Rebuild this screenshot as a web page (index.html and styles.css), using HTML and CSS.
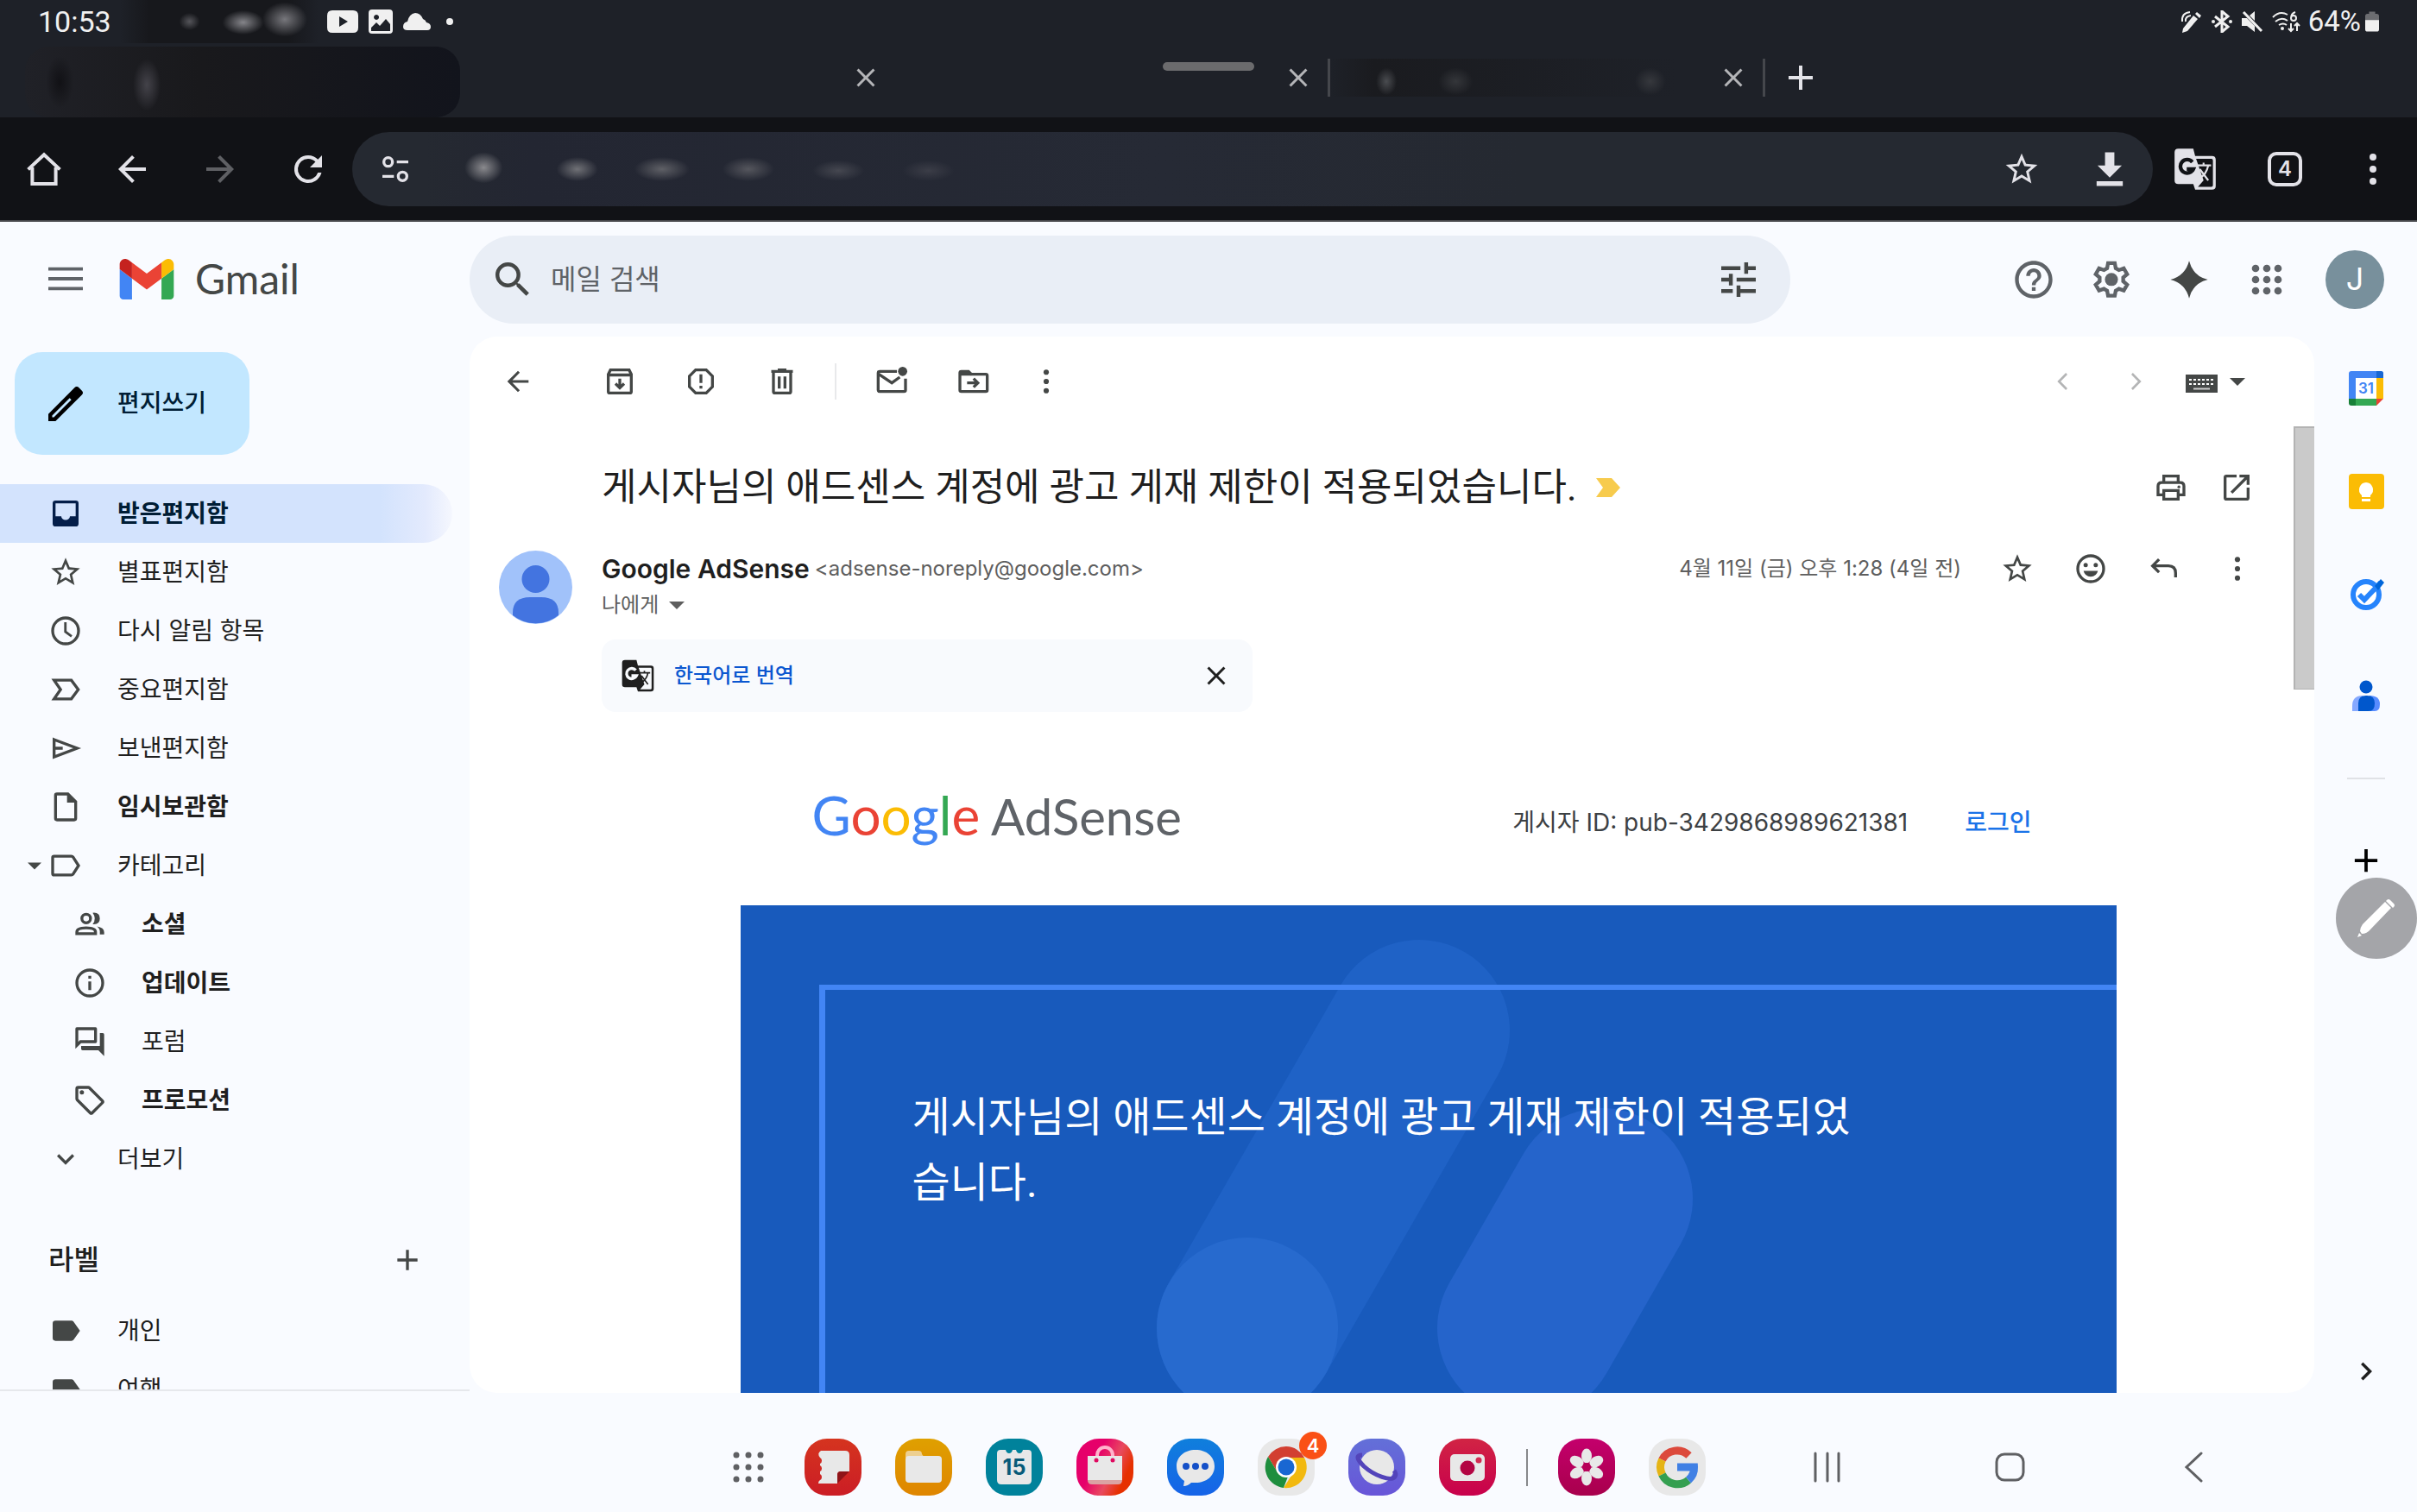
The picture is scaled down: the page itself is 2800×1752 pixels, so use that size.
FILE: index.html
```html
<!DOCTYPE html>
<html lang="ko">
<head>
    <meta charset="UTF-8">
    <meta name="viewport" content="width=device-width, initial-scale=1.0">
    <title>Gmail</title>
    <link rel="stylesheet" href="styles.css">
</head>
<body>
    <!-- Shared icons -->
    <svg class="defs" aria-hidden="true">
        <symbol id="i-star" viewBox="0 0 24 24"><path d="M22 9.24l-7.19-.62L12 2 9.19 8.63 2 9.24l5.46 4.73L5.82 21 12 17.27 18.18 21l-1.63-7.03L22 9.24zM12 15.4l-3.76 2.27 1-4.28-3.32-2.88 4.38-.38L12 6.1l1.71 4.04 4.38.38-3.32 2.88 1 4.28L12 15.4z"/></symbol>
        <symbol id="i-more" viewBox="0 0 24 24"><circle cx="12" cy="5" r="2"/><circle cx="12" cy="12" r="2"/><circle cx="12" cy="19" r="2"/></symbol>
        <symbol id="i-close" viewBox="0 0 24 24"><path d="M19 6.41L17.59 5 12 10.59 6.41 5 5 6.41 10.59 12 5 17.59 6.41 19 12 13.41 17.59 19 19 17.59 13.41 12z"/></symbol>
        <symbol id="i-plus" viewBox="0 0 24 24"><path d="M19 13h-6v6h-2v-6H5v-2h6V5h2v6h6v2z"/></symbol>
        <symbol id="i-back" viewBox="0 0 24 24"><path d="M20 11H7.83l5.59-5.59L12 4l-8 8 8 8 1.41-1.41L7.83 13H20v-2z"/></symbol>
        <symbol id="i-right" viewBox="0 0 24 24"><path d="M10 6L8.59 7.41 13.17 12l-4.58 4.59L10 18l6-6z"/></symbol>
        <symbol id="i-label" viewBox="0 0 24 24"><path d="M3 7a2 2 0 0 1 2-2h11c.67 0 1.27.33 1.63.84L22 12l-4.37 6.16c-.36.51-.96.84-1.63.84H5a2 2 0 0 1-2-2V7z"/></symbol>
    </svg>

    <!-- Status bar -->
    <div class="statusbar">
        <div class="status-left">
            <span class="clock">10:53</span>
            <span class="smudge"></span>
            <svg viewBox="0 0 36 26"><path fill-rule="evenodd" d="M6 0h24q6 0 6 6v14q0 6-6 6H6q-6 0-6-6V6q0-6 6-6zM14 7v12l10-6z"/></svg>
            <svg viewBox="0 0 28 28"><path fill-rule="evenodd" d="M4 0h20q4 0 4 4v20q0 4-4 4H4q-4 0-4-4V4q0-4 4-4zM3 25h22v-8l-5-6-7 8-4-4-6 6zM9 6a3 3 0 1 0 .1 0z"/></svg>
            <svg viewBox="0 0 32 20"><path d="M5 20q-5 0-5-4 0-5 5-6Q7 1 14 0q6 0 9 7 3 1 4 4 5 1 5 5 0 4-4 4z"/></svg>
            <span class="dot"></span>
        </div>
        <div class="status-right">
            <svg viewBox="0 0 26 26"><path d="M3 21L15 6l5 4L8 24l-6 2zM17 4l2-2 5 4-2 3z"/><path class="line" d="M2 13Q1 3 11 2M6 13Q5 7 12 6"/></svg>
            <svg viewBox="0 0 26 26"><path class="line thick" d="M5 7l15 12-7 6V1l7 6L5 19"/><circle cx="3" cy="13" r="2"/><circle cx="23" cy="13" r="2"/></svg>
            <svg viewBox="0 0 26 26"><path d="M1 9h6l9 9v7l-9-7H1zM10 6l6-5v11z"/><path class="line thick" d="M3 2l21 22"/></svg>
            <svg class="wifi" viewBox="0 0 34 26"><path class="line" d="M2 8Q10 0 19 5M5 13q7-6 14-1M9 17q5-3 9 0M28 2q-5 2-5 7a3 3 0 1 0 3-3q-3 0-3 3M23 15v9m-3-3l3 3 3-3M30 24v-9m-3 3l3-3 3 3"/><circle cx="13" cy="21" r="2"/></svg>
            <span class="percent">64%</span>
            <svg class="battery" viewBox="0 0 18 26"><path class="dim" d="M5 0h8v3h2q3 0 3 3v6H0V6q0-3 3-3h2z"/><path d="M0 11h18v12q0 3-3 3H3q-3 0-3-3z"/></svg>
        </div>
    </div>

    <!-- Browser tabs -->
    <div class="tabs">
        <div class="tab active"></div>
        <div class="tab"><button aria-label="탭 닫기"><svg><use href="#i-close"/></svg></button></div>
        <div class="tab ruled"><button aria-label="탭 닫기"><svg><use href="#i-close"/></svg></button></div>
        <div class="tab ruled blurred"><button aria-label="탭 닫기"><svg><use href="#i-close"/></svg></button></div>
        <button class="new-tab" aria-label="새 탭"><svg><use href="#i-plus"/></svg></button>
        <span class="handle"></span>
    </div>

    <!-- Browser toolbar -->
    <div class="browser-bar">
        <button aria-label="홈"><svg viewBox="0 0 24 24"><path class="stroke" d="M2.8 12.2L12 3.6l9.200 8.600M5.200 11v9.500h13.600V11"/></svg></button>
        <button aria-label="뒤로"><svg><use href="#i-back"/></svg></button>
        <button class="off" aria-label="앞으로" disabled><svg viewBox="0 0 24 24"><path d="M4 11h12.170l-5.590-5.590L12 4l8 8-8 8-1.410-1.410L16.170 13H4v-2z"/></svg></button>
        <button aria-label="새로고침"><svg viewBox="0 0 24 24"><path d="M17.65 6.350A7.960 7.960 0 0 0 12 4a8 8 0 1 0 7.730 10h-2.080A6 6 0 1 1 12 6c1.660 0 3.140.69 4.220 1.780L13 11h7V4l-2.350 2.350z"/></svg></button>
        <div class="omnibox">
            <svg viewBox="0 0 24 24"><path class="stroke" d="M13 7h8M3 17h8"/><circle class="stroke" cx="7" cy="7" r="3"/><circle class="stroke" cx="17" cy="17" r="3"/></svg>
            <input type="text" aria-label="주소">
            <button aria-label="북마크"><svg><use href="#i-star"/></svg></button>
            <button aria-label="다운로드"><svg class="wide" viewBox="0 0 24 24"><path d="M9.500 3h5v7h4L12 16.500 5.500 10h4zM5 18.500h14V21H5z"/></svg></button>
        </div>
        <button aria-label="번역"><svg class="wide" viewBox="0 0 24 24"><path d="M3 1h8l1 4h9q2 0 2 2v14q0 2-2 2h-9l-1-3H3q-2 0-2-2V3q0-2 2-2z"/><path class="hole" d="M12.500 6.500h8.200q.8 0 .8.8v13.400q0 .8-.8.8h-7.200l3-3.500z"/><path class="hole-line" d="M10.500 8.200A3.600 3.600 0 1 0 11 12H7.500"/><path class="ink-line" d="M13 10h7.500M16.500 8.500V10M19 10q-1 5-5 7M14.500 12l4.500 6"/></svg></button>
        <button class="tab-count" aria-label="열린 탭">4</button>
        <button aria-label="메뉴"><svg><use href="#i-more"/></svg></button>
    </div>

    <div class="gmail">
        <header class="header">
            <div class="brand">
                <button aria-label="기본 메뉴"><svg class="menu-icon" viewBox="3 3 18 18"><path d="M3 18h18v-1.700H3V18zm0-5.150h18v-1.700H3v1.700zM3 6v1.700h18V6H3z"/></svg></button>
                <svg class="gmail-logo" viewBox="0 0 88 66"><path fill="#4285f4" d="M6 66h14V32L0 17v43c0 3.300 2.700 6 6 6"/><path fill="#34a853" d="M68 66h14c3.300 0 6-2.700 6-6V17L68 32"/><path fill="#fbbc04" d="M68 6v26l20-15V9c0-7.400-8.500-11.700-14.400-7.200"/><path fill="#ea4335" d="M20 32V6l24 18L68 6v26L44 50"/><path fill="#c5221f" d="M0 9v8l20 15V6l-5.600-4.200C8.500-2.700 0 1.600 0 9"/></svg>
                <span class="brand-name">Gmail</span>
            </div>
            <form class="search">
                <button type="button" aria-label="검색"><svg viewBox="3 3 18 18"><path d="M15.500 14h-.79l-.28-.27A6.470 6.470 0 0 0 16 9.500 6.500 6.500 0 1 0 9.500 16c1.610 0 3.090-.59 4.230-1.570l.27.28v.79l5 4.990L20.490 19l-4.990-5zm-6 0C7.010 14 5 11.990 5 9.500S7.010 5 9.500 5 14 7.010 14 9.500 11.990 14 9.500 14z"/></svg></button>
                <input type="text" placeholder="메일 검색" aria-label="메일 검색">
                <button type="button" aria-label="검색 옵션"><svg viewBox="3 3 18 18"><path d="M3 17v2h6v-2H3zM3 5v2h10V5H3zm10 16v-2h8v-2h-8v-2h-2v6h2zM7 9v2H3v2h4v2h2V9H7zm14 4v-2H11v2h10zm-6-4h2V7h4V5h-4V3h-2v6z"/></svg></button>
            </form>
            <div class="header-actions">
                <button aria-label="지원"><svg viewBox="0 0 24 24"><path d="M11 18h2v-2h-2v2zm1-16C6.480 2 2 6.480 2 12s4.480 10 10 10 10-4.480 10-10S17.520 2 12 2zm0 18c-4.410 0-8-3.590-8-8s3.590-8 8-8 8 3.590 8 8-3.590 8-8 8zm0-14c-2.210 0-4 1.790-4 4h2c0-1.100.9-2 2-2s2 .9 2 2c0 2-3 1.750-3 5h2c0-2.250 3-2.500 3-5 0-2.210-1.790-4-4-4z"/></svg></button>
                <button aria-label="설정"><svg viewBox="0 0 24 24"><path class="stroke" d="M10.200 3.200h3.600l.5 2.700 1.700 1 2.600-.9 1.800 3.100-2.100 1.800v2l2.100 1.800-1.800 3.100-2.600-.9-1.700 1-.5 2.700h-3.600l-.5-2.700-1.700-1-2.600.9-1.800-3.100 2.100-1.800v-2L3.600 9.100l1.800-3.100 2.600.9 1.700-1z"/><circle cx="12" cy="11.900" r="3.500"/></svg></button>
                <button class="dark" aria-label="Gemini"><svg viewBox="0 0 24 24"><path d="M12 2q2 8 10 10-8 2-10 10-2-8-10-10 8-2 10-10z"/></svg></button>
                <button aria-label="Google 앱"><svg viewBox="0 0 24 24"><path d="M6 8a2 2 0 1 0 0-4 2 2 0 0 0 0 4zm6 12a2 2 0 1 0 0-4 2 2 0 0 0 0 4zm-6 0a2 2 0 1 0 0-4 2 2 0 0 0 0 4zm0-6a2 2 0 1 0 0-4 2 2 0 0 0 0 4zm6 0a2 2 0 1 0 0-4 2 2 0 0 0 0 4zm4-8a2 2 0 1 0 4 0 2 2 0 0 0-4 0zm-4 2a2 2 0 1 0 0-4 2 2 0 0 0 0 4zm6 6a2 2 0 1 0 0-4 2 2 0 0 0 0 4zm0 6a2 2 0 1 0 0-4 2 2 0 0 0 0 4z"/></svg></button>
                <button class="account" aria-label="계정">J</button>
            </div>
        </header>

        <div class="body">
            <aside class="sidebar">
                <button class="compose"><svg viewBox="3 3 18 18"><path d="M3 17.250V21h3.750L20.500 7.250a1.500 1.500 0 0 0 0-2.100L18.850 3.500a1.500 1.500 0 0 0-2.100 0zM5.900 19H5v-.9L14.100 9l.9.9z" fill-rule="evenodd"/></svg>편지쓰기</button>
                <nav class="folders">
                    <a href="#" class="current"><svg viewBox="0 0 24 24"><path d="M19 3H5a2 2 0 0 0-2 2v14a2 2 0 0 0 2 2h14a2 2 0 0 0 2-2V5a2 2 0 0 0-2-2zm0 11h-4c0 1.600-1.350 2.500-3 2.500S9 15.600 9 14H5V5h14v9z"/></svg>받은편지함</a>
                    <a href="#"><svg><use href="#i-star"/></svg>별표편지함</a>
                    <a href="#"><svg viewBox="0 0 24 24"><path d="M12 2a10 10 0 1 0 0 20 10 10 0 0 0 0-20zm0 18a8 8 0 1 1 0-16 8 8 0 0 1 0 16zm.7-14H11v7l4.700 3.500 1-1.300-4-3z"/></svg>다시 알림 항목</a>
                    <a href="#"><svg viewBox="0 0 24 24"><path class="stroke" d="M4 5.500h12L20.800 12 16 18.500H4L8.500 12z"/></svg>중요편지함</a>
                    <a href="#"><svg viewBox="0 0 24 24"><path class="stroke" d="M4 6l16 6-16 6zM4 12h6"/></svg>보낸편지함</a>
                    <a href="#" class="unread"><svg viewBox="0 0 24 24"><path d="M14 2H6a2 2 0 0 0-2 2v16a2 2 0 0 0 2 2h12a2 2 0 0 0 2-2V8zM6 20V4h7v5h5v11z"/></svg>임시보관함</a>
                    <a href="#" class="category"><svg class="caret" viewBox="0 0 16 8"><path d="M0 0h16L8 8z"/></svg><svg viewBox="0 0 24 24"><path class="stroke" d="M3 6.500q0-1 1-1h12q.8 0 1.200.6L21 12l-3.800 5.900q-.4.6-1.200.6H4q-1 0-1-1z"/></svg>카테고리</a>
                    <a href="#" class="sub unread"><svg viewBox="0 0 24 24"><circle class="stroke" cx="9.500" cy="8" r="3"/><path class="stroke" d="M3 18.500v-1q0-3 6.500-3t6.500 3v1z"/><path d="M14 4q5-.5 5 4t-5 4q3-4 0-8zM17 13.500q5 .8 5 4V19h-3v-2q0-2-2-3.500z"/></svg>소셜</a>
                    <a href="#" class="sub unread"><svg viewBox="0 0 24 24"><path d="M11 7h2v2h-2zm0 4h2v6h-2zm1-9a10 10 0 1 0 0 20 10 10 0 0 0 0-20zm0 18a8 8 0 1 1 0-16 8 8 0 0 1 0 16z"/></svg>업데이트</a>
                    <a href="#" class="sub"><svg viewBox="0 0 24 24"><path d="M15 4v7H5.170L4 12.170V4h11m1-2H3a1 1 0 0 0-1 1v14l4-4h10a1 1 0 0 0 1-1V3a1 1 0 0 0-1-1zm5 4h-2v9H6v2a1 1 0 0 0 1 1h11l4 4V7a1 1 0 0 0-1-1z"/></svg>포럼</a>
                    <a href="#" class="sub unread"><svg viewBox="0 0 24 24"><path d="M21.410 11.580l-9-9A2 2 0 0 0 11 2H4a2 2 0 0 0-2 2v7c0 .55.22 1.050.59 1.420l9 9a2 2 0 0 0 2.820 0l7-7a2 2 0 0 0 0-2.840zM13 20.010L4 11V4h7v-.010l9 9-7 7.020z"/><circle cx="6.500" cy="6.500" r="1.500"/></svg>프로모션</a>
                    <a href="#"><svg viewBox="0 0 24 24"><path d="M16.590 8.590L12 13.170 7.410 8.590 6 10l6 6 6-6z"/></svg>더보기</a>
                </nav>
                <div class="labels-head">
                    <h2>라벨</h2>
                    <button aria-label="새 라벨"><svg><use href="#i-plus"/></svg></button>
                </div>
                <nav class="folders">
                    <a href="#"><svg><use href="#i-label"/></svg>개인</a>
                    <a href="#"><svg><use href="#i-label"/></svg>여행</a>
                </nav>
            </aside>

            <main class="card">
                <div class="mail-tools">
                    <button class="go-back" aria-label="뒤로"><svg viewBox="-1 -1 26 26"><use href="#i-back" width="24" height="24"/></svg></button>
                    <div class="tool-group">
                        <button aria-label="보관처리"><svg viewBox="0 0 24 24"><path class="stroke" d="M4 7l1.500-3h13L20 7v12q0 1-1 1H5q-1 0-1-1zM4 7.500h16M12 10v6M9 13.500l3 3 3-3"/></svg></button>
                        <button aria-label="스팸신고"><svg viewBox="0 0 24 24"><path class="stroke" d="M8.300 4h7.400L20 8.300v7.400L15.700 20H8.300L4 15.700V8.300z"/><path d="M11 7h2v6h-2zm0 8h2v2h-2z"/></svg></button>
                        <button aria-label="삭제"><svg viewBox="0 0 24 24"><path class="stroke" d="M6 6v13q0 1 1 1h10q1 0 1-1V6M4.500 5h15M9 4h6M10 8.500v8.500M14 8.500v8.500"/></svg></button>
                    </div>
                    <div class="tool-group last">
                        <button aria-label="읽지 않음으로 표시"><svg viewBox="0 0 24 24"><path class="stroke" d="M15 5H3q-1 0-1 1v12q0 1 1 1h17q1 0 1-1v-8M2.500 7L11.500 13 17 9"/><circle cx="19" cy="5" r="3.200"/></svg></button>
                        <button aria-label="이동"><svg viewBox="0 0 24 24"><path class="stroke" d="M3 6q0-1 1-1h5l2 2h10q1 0 1 1v10q0 1-1 1H4q-1 0-1-1zM8 13h7M12.500 10l3 3-3 3"/><path d="M3 5h6l2 3H3z"/></svg></button>
                        <button class="slim" aria-label="더보기"><svg viewBox="-1 -1 26 26"><use href="#i-more" width="24" height="24"/></svg></button>
                    </div>
                    <div class="pager">
                        <button class="faint" aria-label="이전"><svg viewBox="0 0 24 24"><path d="M15 7.200L13.900 6 8 12l5.900 6 1.100-1.200L10.300 12z"/></svg></button>
                        <button class="faint" aria-label="다음"><svg viewBox="0 0 24 24"><path d="M9 7.200L10.100 6 16 12l-5.900 6L9 16.800l4.700-4.800z"/></svg></button>
                        <button class="keyboard" aria-label="입력 도구"><svg viewBox="0 0 40 40"><path d="M2 12h37v21H2z"/><path class="keys" d="M6 18h29M6 23h29"/><path class="bar" d="M11 28.500h19"/></svg><svg class="caret" viewBox="0 0 16 8"><path d="M0 0h16L8 8z"/></svg></button>
                    </div>
                </div>

                <div class="thread">
                    <div class="thread-content">
                        <div class="subject">
                            <h1>게시자님의 애드센스 계정에 광고 게재 제한이 적용되었습니다.</h1>
                            <svg class="marker" viewBox="0 0 28 22"><path d="M0 0h18l10 11-10 11H0l8-11z"/></svg>
                            <div class="subject-actions">
                                <button aria-label="인쇄"><svg viewBox="0 0 24 24"><path class="stroke" d="M7 8V4h10v4M7 17H3v-6q0-2.500 2.500-2.500h13Q21 8.500 21 11v6h-4M7 14h10v6H7z"/><circle cx="17.500" cy="11.500" r="1"/></svg></button>
                                <button aria-label="새 창에서 열기"><svg viewBox="0 0 24 24"><path d="M19 19H5V5h7V3H5a2 2 0 0 0-2 2v14a2 2 0 0 0 2 2h14a2 2 0 0 0 2-2v-7h-2v7zM14 3v2h3.590l-9.830 9.830 1.410 1.410L19 6.410V10h2V3h-7z"/></svg></button>
                            </div>
                        </div>

                        <div class="message">
                            <svg class="avatar" viewBox="0 0 85 85"><circle cx="42.500" cy="42.500" r="42.500" fill="#a1c2fa"/><circle cx="42.500" cy="33" r="16" fill="#4374e0"/><path d="M16 75v-3q0-18 20-18h13q20 0 20 18v3a42.500 42.500 0 0 1-53 0z" fill="#4374e0"/></svg>
                            <div class="message-main">
                                <div class="message-head">
                                    <div>
                                        <p class="from"><strong>Google AdSense</strong><span>&lt;adsense-noreply@google.com&gt;</span></p>
                                        <p class="to">나에게 <svg class="caret" viewBox="0 0 16 8"><path d="M0 0h16L8 8z"/></svg></p>
                                    </div>
                                    <div class="message-actions">
                                        <time>4월 11일 (금) 오후 1:28 (4일 전)</time>
                                        <button aria-label="별표"><svg viewBox="0 0 24 24"><use href="#i-star" width="24" height="24"/></svg></button>
                                        <button aria-label="이모티콘"><svg viewBox="0 0 24 24"><circle class="stroke" cx="12" cy="12" r="9"/><circle cx="8.500" cy="9.500" r="1.500"/><circle cx="15.500" cy="9.500" r="1.500"/><path d="M7 13.500h10q-1 4-5 4t-5-4z"/></svg></button>
                                        <button aria-label="답장"><svg viewBox="0 0 24 24"><path class="stroke" d="M8.500 5.500L4 10l4.500 4.500M4 10h11q5 0 5 5v3"/></svg></button>
                                        <button aria-label="더보기"><svg viewBox="-1 -1 26 26"><use href="#i-more" width="24" height="24"/></svg></button>
                                    </div>
                                </div>

                                <div class="translate">
                                    <svg viewBox="0 0 24 24"><path d="M3 1h8l1 4h9q2 0 2 2v14q0 2-2 2h-9l-1-3H3q-2 0-2-2V3q0-2 2-2z"/><path class="hole" d="M12.500 6.500h8.200q.8 0 .8.8v13.400q0 .8-.8.8h-7.200l3-3.500z"/><path class="hole-line" d="M10.500 8.200A3.600 3.600 0 1 0 11 12H7.500"/><path class="ink-line" d="M13 10h7.500M16.500 8.500V10M19 10q-1 5-5 7M14.500 12l4.500 6"/></svg>
                                    <a href="#">한국어로 번역</a>
                                    <button aria-label="닫기"><svg><use href="#i-close"/></svg></button>
                                </div>

                                <div class="email">
                                    <div class="email-head">
                                        <div class="adsense-logo"><span class="google"><span class="b">G</span><span class="r">o</span><span class="y">o</span><span class="b">g</span><span class="g">l</span><span class="r">e</span></span> AdSense</div>
                                        <div class="publisher"><span>게시자 ID: pub-3429868989621381</span><a href="#">로그인</a></div>
                                    </div>
                                    <div class="hero">
                                        <svg class="hero-art" viewBox="0 0 1594 720"><g stroke-width="210" stroke-linecap="round"><path stroke="#1f62c6" d="M786 145L587 490"/><path stroke="#276ace" d="M587 490h.1"/><path stroke="#2564cb" d="M998 340l-86 150"/></g></svg>
                                        <div class="hero-frame">
                                            <h2>게시자님의 애드센스 계정에 광고 게재 제한이 적용되었습니다.</h2>
                                        </div>
                                    </div>
                                </div>
                            </div>
                        </div>
                    </div>
                    <div class="scrollbar"><span></span></div>
                </div>
            </main>

            <aside class="rail">
                <button aria-label="캘린더"><svg viewBox="0 0 42 42"><path fill="#4285f4" d="M4 1h34q3 0 3 3v6H10v23H1V4q0-3 3-3z"/><path fill="#1967d2" d="M33 1h5q3 0 3 3v6h-8z"/><path fill="#fbbc04" d="M33 9h8v24h-8z"/><path fill="#34a853" d="M9 33h24v8H9z"/><path fill="#188038" d="M1 33h8v8H4q-3 0-3-3z"/><path fill="#ea4335" d="M33 33h8l-8 8z"/><path fill="#fff" d="M9 9h24v24H9z"/><text x="21" y="27" text-anchor="middle">31</text></svg></button>
                <button aria-label="Keep"><svg viewBox="0 0 42 42"><rect x="1" y="1" width="41" height="41" rx="4" fill="#fbbc04"/><path fill="#fff" d="M21 11a8.500 8.500 0 0 1 5 15v2H16v-2a8.500 8.500 0 0 1 5-15zM16 30h10v3H16z"/></svg></button>
                <button aria-label="Tasks"><svg viewBox="0 0 42 42"><circle cx="21" cy="22" r="15" fill="#fff" stroke="#2684fc" stroke-width="6"/><path d="M13 22l6 6L38 8" fill="none" stroke="#2684fc" stroke-width="6"/><path d="M31 12l7-8 4 4-7 9z" fill="#0066da"/></svg></button>
                <button aria-label="주소록"><svg viewBox="0 0 42 42"><circle cx="21" cy="10" r="7.500" fill="#0057cc"/><path fill="#86a9ff" d="M5 38v-6q0-12 12-12v18z"/><path fill="#578cff" d="M25 20q12 0 12 10 0 8-6 8h-6z"/><path fill="#0057cc" d="M12 38v-9q0-9 9-9h1q9 0 9 9 0 9-7 9z"/></svg></button>
                <span class="rail-line"></span>
                <button class="add" aria-label="부가기능 설치하기"><svg viewBox="4 4 16 16"><use href="#i-plus" width="24" height="24"/></svg></button>
                <button class="hide-rail" aria-label="측면 패널 숨기기"><svg><use href="#i-right"/></svg></button>
            </aside>
        </div>

        <button class="pen" aria-label="S펜"><svg viewBox="0 0 48 48"><path d="M2 46l2-5 3 3zM5 39q0-4 3-8L34 5l7 7-24 25q-4 5-10 5zM36 3q2-2 4 0l4 4q2 2 0 4l-1 1-8-8z"/></svg></button>
    </div>

    <!-- Taskbar -->
    <footer class="taskbar">
        <div class="apps">
            <button class="all-apps" aria-label="앱"><svg viewBox="0 0 36 36"><g fill="#5f6063"><circle cx="4" cy="4" r="3.500"/><circle cx="18" cy="4" r="3.500"/><circle cx="32" cy="4" r="3.500"/><circle cx="4" cy="18" r="3.500"/><circle cx="18" cy="18" r="3.500"/><circle cx="32" cy="18" r="3.500"/><circle cx="4" cy="32" r="3.500"/><circle cx="18" cy="32" r="3.500"/><circle cx="32" cy="32" r="3.500"/></g></svg></button>
            <button class="app notes" aria-label="노트"><svg viewBox="0 0 66 66"><path fill="#e8e8e8" d="M19 14h28q5 0 5 5v19H42q-4 0-4 4v10H16q0-3 2-4a4 4 0 0 0 0-7v-3a4 4 0 0 0 0-7v-2a4 4 0 0 0 0-7q-4-5 1-8z"/><path fill="#8f1418" d="M38 52V42q0-4 4-4h10z"/></svg></button>
            <button class="app files" aria-label="내 파일"><svg viewBox="0 0 66 66"><path fill="#edcf90" d="M12 18q0-4 4-4h11q4 0 4 4l3 4H12z"/><rect x="12" y="20" width="42" height="31" rx="4" fill="#e8e8e8"/></svg></button>
            <button class="app cal" aria-label="캘린더"><svg viewBox="0 0 66 66"><path fill="#e8e8e8" d="M17 13h6q1 4 4 4t4-4h4q1 4 4 4t4-4h6q4 0 4 4v31q0 5-5 5H18q-5 0-5-5V17q0-4 4-4z"/><text x="33" y="42" text-anchor="middle">15</text></svg></button>
            <button class="app store" aria-label="스토어"><svg viewBox="0 0 66 66"><path fill="none" stroke="#ffb3cb" stroke-width="4" d="M24 22v-3a9 9 0 0 1 18 0v3"/><path fill="#e8e8e8" d="M13 20h40v28H13z"/><path fill="#dba3a3" d="M13 48h40q0 5-5 5H18q-5 0-5-5z"/><circle cx="23" cy="25" r="2.500" fill="#e00a60"/><circle cx="42" cy="25" r="2.500" fill="#e00a60"/></svg></button>
            <button class="app chat" aria-label="메시지"><svg viewBox="0 0 66 66"><path fill="#e8e8e8" d="M33 13c13 0 22 8 22 19s-9 19-22 19h-5q-4 4-9 4l1-6C14 45 11 39 11 32c0-11 9-19 22-19z"/><g fill="#1450c8"><circle cx="22" cy="32" r="4"/><circle cx="33" cy="32" r="4"/><circle cx="44" cy="32" r="4"/></g></svg></button>
            <button class="app light" aria-label="Chrome"><svg viewBox="0 0 66 66"><path fill="#d23f31" d="M12 21A24 24 0 0 1 54 22H33l-10 17z"/><path fill="#1e8e3e" d="M12 21l11 18 12 5-5 13A24 24 0 0 1 12 21z"/><path fill="#f2b90f" d="M54 22A24 24 0 0 1 30 57l12-19 0-11-8-5z"/><circle cx="33" cy="33" r="12" fill="#fff"/><circle cx="33" cy="33" r="9.500" fill="#1967d2"/></svg><span class="badge">4</span></button>
            <button class="app internet" aria-label="인터넷"><svg viewBox="0 0 66 66"><circle cx="33" cy="33" r="20" fill="#e8e8e8"/><path fill="none" stroke="#5344ba" stroke-width="5" d="M16 19q-11 0 2 13c12 11 32 18 36 12q2-3-1-7"/></svg></button>
            <button class="app camera" aria-label="카메라"><svg viewBox="0 0 66 66"><rect x="13" y="18" width="40" height="31" rx="5" fill="#e8e8e8"/><circle cx="33" cy="34" r="8.500" fill="#b30543"/><circle cx="46" cy="25" r="3.500" fill="#d42b52"/></svg></button>
            <span class="app-rule"></span>
            <button class="app gallery" aria-label="갤러리"><svg viewBox="0 0 66 66"><g fill="#e8e8e8"><ellipse cx="33" cy="20" rx="6" ry="8.500"/><ellipse cx="33" cy="46" rx="6" ry="8.500"/><ellipse cx="33" cy="20" rx="6" ry="8.500" transform="rotate(60 33 33)"/><ellipse cx="33" cy="20" rx="6" ry="8.500" transform="rotate(120 33 33)"/><ellipse cx="33" cy="20" rx="6" ry="8.500" transform="rotate(240 33 33)"/><ellipse cx="33" cy="20" rx="6" ry="8.500" transform="rotate(300 33 33)"/></g><circle cx="33" cy="33" r="5" fill="#b80058"/></svg></button>
            <button class="app light" aria-label="Google"><svg viewBox="0 0 66 66"><g fill="none" stroke-width="9"><path stroke="#dc4a3c" d="M46.500 19.500A19.500 19.500 0 0 0 15.500 24.500"/><path stroke="#e5b415" d="M15.500 24.500a19.500 19.500 0 0 0 0 17"/><path stroke="#349f50" d="M15.500 41.500A19.500 19.500 0 0 0 46 48"/><path stroke="#4080e4" d="M46 48q7-6 6.500-15H33"/></g></svg></button>
        </div>
        <div class="nav-keys">
            <button aria-label="최근 앱"><svg viewBox="0 0 40 40"><path d="M6 4v32M20 4v32M33 4v32"/></svg></button>
            <button aria-label="홈"><svg viewBox="0 0 40 40"><rect x="4" y="5" width="31" height="30" rx="9"/></svg></button>
            <button aria-label="뒤로"><svg viewBox="0 0 40 40"><path d="M29 4L12 20l17 16"/></svg></button>
        </div>
    </footer>
</body>
</html>
```

FILE: styles.css
```css
* {
    box-sizing: border-box;
}

body {
    font-family: Inter, 'Noto Sans CJK KR', sans-serif;
    margin: 0;
    height: 100vh;
    display: flex;
    flex-direction: column;
    overflow: hidden;
    background-color: #f9fbff;
    color: #1f1f1f;
    font-size: 28px;
    line-height: 1.3;
}

h1, h2, p {
    margin: 0;
    font-weight: 400;
}

button {
    display: flex;
    align-items: center;
    justify-content: center;
    padding: 0;
    border: none;
    background: none;
    color: inherit;
    font: inherit;
    flex-shrink: 0;
}

input {
    flex: 1;
    min-width: 0;
    border: none;
    outline: none;
    background: none;
    font: inherit;
}

a {
    color: inherit;
    text-decoration: none;
}

svg {
    display: block;
    width: 40px;
    height: 40px;
    fill: currentColor;
    flex-shrink: 0;
}

.defs {
    position: absolute;
    width: 0;
    height: 0;
}

.stroke {
    fill: none;
    stroke: currentColor;
    stroke-width: 2;
}

.caret {
    width: 18px;
    height: 9px;
}

.hole {
    fill: #111216;
}

.hole-line {
    fill: none;
    stroke: #111216;
    stroke-width: 2;
}

.ink-line {
    fill: none;
    stroke: currentColor;
    stroke-width: 1;
}

/* Status bar */
.statusbar {
    display: flex;
    justify-content: space-between;
    height: 54px;
    padding: 0 44px;
    background-color: #1e2128;
    color: #f0f0f0;
    font-family: Roboto, sans-serif;
    font-size: 34px;
    line-height: 50px;
}

.status-left,
.status-right {
    display: flex;
    align-items: center;
    height: 50px;
    gap: 10px;
}

.status-left svg {
    width: 32px;
    height: 28px;
}

.status-left svg:first-of-type {
    width: 36px;
}

.smudge {
    width: 230px;
    height: 50px;
    background:
        radial-gradient(ellipse 12px 10px at 35% 50%, #55555a, transparent),
        radial-gradient(ellipse 24px 14px at 62% 52%, #85858a, transparent),
        radial-gradient(ellipse 26px 20px at 83% 45%, #77777c, transparent),
        linear-gradient(90deg, transparent, #17181c 15%, #17181c 85%, transparent);
}

.dot {
    width: 8px;
    height: 8px;
    margin-left: 8px;
    border-radius: 50%;
    background-color: #f0f0f0;
}

.status-right {
    gap: 9px;
}

.status-right svg {
    width: 26px;
    height: 26px;
}

.status-right .wifi {
    width: 34px;
}

.status-right .battery {
    width: 16px;
    height: 26px;
    margin-left: -4px;
}

.percent {
    font-size: 33px;
}

.battery .dim {
    fill: #6c6d71;
}

.line {
    fill: none;
    stroke: currentColor;
    stroke-width: 2;
}

.thick {
    stroke-width: 3;
}

/* Browser tabs */
.tabs {
    position: relative;
    display: flex;
    align-items: center;
    height: 82px;
    padding-left: 29px;
    background-color: #1e2128;
}

.tab {
    display: flex;
    align-items: center;
    justify-content: flex-end;
    flex: 0 1 504px;
    height: 44px;
    padding-right: 16px;
    margin-top: -10px;
    color: #b4b5b8;
}

.tab.active {
    align-self: stretch;
    height: auto;
    margin-top: 0;
    border-radius: 28px;
    background:
        radial-gradient(ellipse 16px 30px at 8% 50%, #111115, transparent),
        radial-gradient(ellipse 16px 30px at 28% 54%, #44434a, transparent),
        linear-gradient(90deg, #202127, #19191c 40%, #12141c);
}

.tab.ruled {
    border-right: 3px solid #45474c;
}

.tab.blurred {
    background:
        radial-gradient(ellipse 12px 16px at 13% 60%, #4a4c50, transparent),
        radial-gradient(ellipse 20px 16px at 29% 60%, #34363a, transparent),
        radial-gradient(ellipse 18px 16px at 74% 60%, #36383d, transparent),
        linear-gradient(90deg, #1e2128, #1a1b1f 10%, #1e2128 80%);
}

.tab svg {
    width: 36px;
    height: 36px;
}

.new-tab {
    margin: -10px 0 0 17px;
    color: #e3e3e8;
}

.new-tab svg {
    width: 48px;
    height: 48px;
}

.handle {
    position: absolute;
    top: 18px;
    left: 50%;
    width: 106px;
    height: 10px;
    margin-left: -53px;
    border-radius: 5px;
    background-color: #6b6b6d;
}

/* Browser toolbar */
.browser-bar {
    display: flex;
    align-items: center;
    height: 121px;
    padding: 0 27px;
    gap: 54px;
    border-bottom: 2px solid #45464a;
    background-color: #111216;
    color: #e3e2e8;
}

.browser-bar svg {
    width: 48px;
    height: 48px;
}

.browser-bar .off {
    color: #5f6064;
}

.omnibox {
    display: flex;
    align-items: center;
    flex: 1;
    height: 86px;
    padding: 0 24px 0 30px;
    gap: 54px;
    margin: 0 -31px 0 -27px;
    border-radius: 43px;
    background:
        radial-gradient(ellipse 22px 18px at 7.300% 48%, #8a8a8e, transparent),
        radial-gradient(ellipse 24px 14px at 12.500% 50%, #707176, transparent),
        radial-gradient(ellipse 32px 14px at 17.200% 50%, #5f6066, transparent),
        radial-gradient(ellipse 30px 14px at 22% 50%, #55565d, transparent),
        radial-gradient(ellipse 30px 12px at 27% 52%, #454750, transparent),
        radial-gradient(ellipse 30px 12px at 32% 52%, #3b3d47, transparent),
        linear-gradient(90deg, transparent 4%, #232632 10%, #262a35 45%, transparent 65%),
        #252931;
}

.omnibox > svg {
    width: 40px;
    height: 40px;
}

.omnibox button svg {
    width: 44px;
    height: 44px;
}

.browser-bar .wide {
    width: 52px;
    height: 52px;
}

.tab-count {
    width: 40px;
    height: 40px;
    margin: 0 4px;
    border: 4px solid #e3e2e8;
    border-radius: 10px;
    font-size: 24px;
    font-weight: 600;
}

/* Gmail header */
.gmail {
    position: relative;
    display: flex;
    flex-direction: column;
    flex: 1;
    min-height: 0;
}

.header {
    display: flex;
    align-items: center;
    height: 133px;
    padding-right: 38px;
    flex-shrink: 0;
}

.brand {
    display: flex;
    align-items: center;
    width: 544px;
    padding-left: 56px;
    flex-shrink: 0;
    color: #5f6368;
}

.gmail-logo {
    width: 64px;
    height: 47px;
    margin: 0 24px 0 42px;
}

.brand-name {
    color: #444746;
    font-family: Lato, sans-serif;
    font-size: 48px;
}

.search {
    display: flex;
    align-items: center;
    flex: 0 1 1530px;
    height: 102px;
    padding: 0 40px 0 30px;
    gap: 22px;
    border-radius: 51px;
    background-color: #e9eef6;
    color: #444746;
    font-size: 32px;
}

.search input::placeholder {
    color: #5f6368;
    opacity: 1;
}

.header-actions {
    display: flex;
    align-items: center;
    gap: 38px;
    margin-left: auto;
    color: #5f6368;
}

.header-actions svg {
    width: 52px;
    height: 52px;
}

.header-actions .dark {
    color: #444746;
}

.account {
    width: 68px;
    height: 68px;
    margin-left: 4px;
    border-radius: 50%;
    background-color: #78909c;
    color: #fff;
    font-size: 36px;
}

.body {
    display: flex;
    flex: 1;
    min-height: 0;
}

/* Sidebar */
.sidebar {
    width: 544px;
    padding-top: 18px;
    margin-bottom: 2px;
    flex-shrink: 0;
    overflow: hidden;
    border-bottom: 2px solid #e6e8ec;
}

.compose {
    justify-content: flex-start;
    width: 272px;
    height: 119px;
    margin: 0 0 34px 17px;
    padding-left: 39px;
    gap: 40px;
    border-radius: 32px;
    background-color: #c2e7ff;
    color: #001d35;
    font-weight: 500;
}

.compose svg {
    fill: #000;
}

.folders a {
    display: flex;
    align-items: center;
    height: 68px;
    padding-left: 56px;
    gap: 40px;
}

.folders svg {
    color: #444746;
}

.folders .current {
    margin-right: 20px;
    border-radius: 0 34px 34px 0;
    background: linear-gradient(90deg, #d3e3fd 84%, #e3eafd 94%, #f5f7fe);
    color: #001d35;
    font-weight: 700;
}

.folders .current svg {
    color: #041e49;
}

.folders .unread {
    font-weight: 700;
}

.folders .sub {
    padding-left: 84px;
}

.folders .category {
    padding-left: 32px;
}

.folders .category .caret {
    width: 16px;
    margin-right: -32px;
}

.labels-head {
    display: flex;
    align-items: center;
    justify-content: space-between;
    height: 131px;
    padding: 34px 52px 0 56px;
}

.labels-head h2 {
    font-size: 32px;
    font-weight: 500;
}

.labels-head button {
    color: #444746;
}

/* Mail card */
.card {
    display: flex;
    flex-direction: column;
    flex: 1;
    min-width: 0;
    overflow: hidden;
    border-radius: 32px;
    background-color: #fff;
}

.mail-tools {
    display: flex;
    align-items: center;
    height: 104px;
    padding: 0 80px 0 36px;
    flex-shrink: 0;
    color: #444746;
}

.go-back {
    margin-right: 78px;
}

.tool-group {
    display: flex;
    align-items: center;
    height: 42px;
    gap: 54px;
    padding-right: 41px;
    border-right: 2px solid #e8e9eb;
}

.tool-group.last {
    gap: 53px;
    padding: 0 0 0 45px;
    border: none;
}

.slim {
    width: 24px;
}

.pager {
    display: flex;
    align-items: center;
    gap: 44px;
    margin-left: auto;
}

.faint {
    color: #b4b5b6;
}

.keyboard {
    gap: 13px;
    margin-left: -8px;
}

.keys {
    fill: none;
    stroke: #fff;
    stroke-width: 2;
    stroke-dasharray: 3 2;
}

.bar {
    stroke: #ccc;
    stroke-width: 2;
}

.thread {
    display: flex;
    flex: 1;
    min-height: 0;
}

.thread-content {
    flex: 1;
    min-width: 0;
    overflow: hidden;
}

.scrollbar {
    width: 24px;
}

.scrollbar span {
    display: block;
    height: 305px;
    border: solid #b3b3b3;
    border-width: 2px 0 1px 2px;
    background-color: #cacaca;
}

.subject {
    display: flex;
    align-items: center;
    padding: 41px 46px 43px 153px;
}

.subject h1,
.hero-frame h2 {
    font-family: Roboto, 'Noto Sans CJK KR', sans-serif;
}

.subject h1 {
    font-size: 44px;
    line-height: 60px;
}

.marker {
    width: 28px;
    height: 22px;
    margin-left: 22px;
    color: #f7cb4d;
}

.subject-actions {
    display: flex;
    gap: 36px;
    margin-left: auto;
    color: #444746;
}

.message {
    display: flex;
    padding-left: 34px;
    gap: 34px;
}

.avatar {
    width: 85px;
    height: 85px;
}

.message-main {
    flex: 1;
    min-width: 0;
}

.message-head {
    display: flex;
    justify-content: space-between;
    padding-right: 45px;
    line-height: 42px;
}

.from {
    display: flex;
    gap: 6px;
}

.from strong {
    font-size: 30px;
    font-weight: 600;
}

.from span,
.to,
.message-actions {
    color: #5e5e5e;
    font-size: 24px;
}

.to {
    display: flex;
    align-items: center;
    gap: 12px;
}

.message-actions {
    display: flex;
    align-items: center;
    height: 42px;
    gap: 45px;
}

.message-actions button {
    color: #444746;
}

.translate {
    display: flex;
    align-items: center;
    width: 754px;
    height: 84px;
    margin-top: 19px;
    padding: 0 24px 0 22px;
    gap: 22px;
    border-radius: 16px;
    background-color: #f8fafd;
    color: #1f1f1f;
    font-size: 24px;
}

.translate .hole {
    fill: #f8fafd;
}

.translate .hole-line {
    stroke: #f8fafd;
}

.translate a {
    color: #0b57d0;
    font-weight: 500;
}

.translate button {
    margin-left: auto;
}

.translate button svg {
    width: 36px;
    height: 36px;
}

/* Email body */
.email {
    max-width: 1639px;
    margin: 0 auto;
    padding-right: 45px;
}

.email-head {
    display: flex;
    align-items: center;
    justify-content: space-between;
    height: 224px;
    padding: 15px 98px 0 83px;
}

.adsense-logo {
    color: #5f6368;
    font-family: Lato, sans-serif;
    font-size: 58px;
}

.adsense-logo .google {
    font-size: 62px;
}

.adsense-logo .b {
    color: #4285f4;
}

.adsense-logo .r {
    color: #ea4335;
}

.adsense-logo .y {
    color: #fbbc04;
}

.adsense-logo .g {
    color: #34a853;
}

.publisher {
    display: flex;
    gap: 66px;
    padding-top: 17px;
    color: #3c4043;
}

.publisher a {
    color: #1a73e8;
    font-weight: 500;
}

.hero {
    position: relative;
    height: 720px;
    padding: 92px 0 0 91px;
    overflow: hidden;
    background-color: #185abc;
}

.hero-art {
    position: absolute;
    top: 0;
    left: 0;
    width: 100%;
    height: 100%;
}

.hero-frame {
    position: relative;
    height: 100%;
    padding: 110px 0 0 101px;
    border-top: 6px solid #4285f4;
    border-left: 7px solid #4285f4;
}

.hero-frame h2 {
    max-width: 1110px;
    color: #fff;
    font-size: 48px;
    line-height: 76px;
}

/* Side panel */
.rail {
    display: flex;
    flex-direction: column;
    align-items: center;
    width: 119px;
    padding: 39px 0 4px;
    gap: 77px;
}

.rail svg {
    width: 42px;
    height: 42px;
}

.rail text {
    fill: #4285f4;
    font-size: 17px;
    font-weight: 600;
}

.rail-line {
    width: 44px;
    height: 2px;
    margin: -4px 0 2px;
    background-color: #e0e2e6;
}

.rail .add svg {
    width: 30px;
    height: 30px;
    fill: #000;
}

.hide-rail {
    margin-top: auto;
}

.pen {
    position: absolute;
    top: 760px;
    right: 0;
    width: 94px;
    height: 94px;
    border-radius: 50%;
    background-color: #a4a5a9;
    color: #fff;
}

.pen svg {
    width: 48px;
    height: 48px;
}

/* Taskbar */
.taskbar {
    display: flex;
    align-items: flex-start;
    justify-content: flex-end;
    height: 138px;
    padding: 34px 239px 0 0;
    flex-shrink: 0;
}

.apps,
.nav-keys {
    display: flex;
    align-items: center;
    height: 104px;
    gap: 39px;
}

.all-apps {
    width: 52px;
}

.all-apps svg {
    width: 36px;
    height: 36px;
}

.app {
    position: relative;
    width: 66px;
    height: 66px;
    border-radius: 26px;
}

.app svg {
    width: 66px;
    height: 66px;
}

.notes { background: linear-gradient(#d5341f, #cb1d25); }
.files { background: linear-gradient(#dfa000, #df8500); }
.cal { background: #00829b; }
.store { background: linear-gradient(115deg, #e6006a 35%, #e84a5f 60%, #e63000 80%); }
.chat { background: linear-gradient(#0f7fdc, #1663e8); }
.light { background: #e8e8e8; }
.internet { background: linear-gradient(#6370d8, #6855d8); }
.camera { background: linear-gradient(#d12444, #c8004c); }
.gallery { background: linear-gradient(#c4006c, #a8004c); }

.cal text {
    fill: #075a78;
    font-size: 25px;
    font-weight: 700;
}

.badge {
    position: absolute;
    top: -8px;
    right: -14px;
    width: 32px;
    height: 32px;
    border-radius: 50%;
    background-color: #fa5016;
    color: #fff;
    font-size: 22px;
    font-weight: 600;
    line-height: 32px;
}

.app-rule {
    width: 2px;
    height: 43px;
    margin: 0 -4px;
    background-color: #87888b;
}

.nav-keys {
    gap: 172px;
    margin-left: 121px;
}

.nav-keys svg {
    fill: none;
    stroke: #5f6063;
    stroke-width: 3;
    stroke-linecap: round;
}
```
